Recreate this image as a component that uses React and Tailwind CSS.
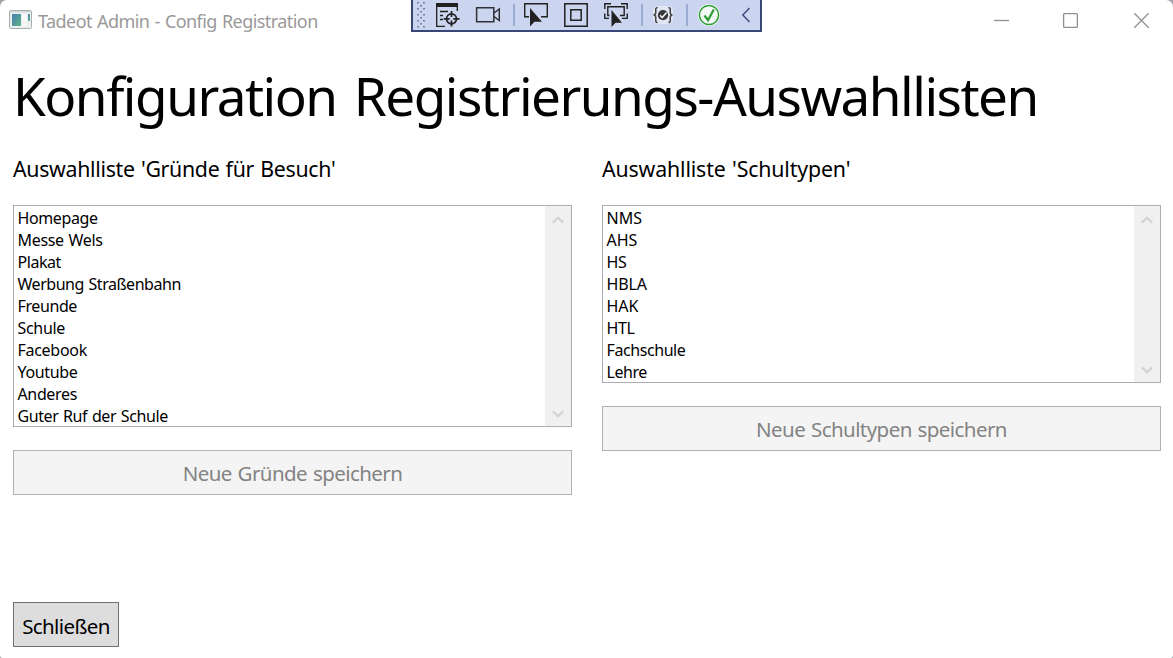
import React from "react";

const reasons = [
  ["Homepage", "tracking-[-0.38px]"],
  ["Messe Wels", "tracking-[-0.33px]"],
  ["Plakat", "tracking-[-0.45px]"],
  ["Werbung Straßenbahn", "tracking-[-0.47px]"],
  ["Freunde", "tracking-[-0.4px]"],
  ["Schule", "tracking-[-0.3px]"],
  ["Facebook", "tracking-[-0.28px]"],
  ["Youtube", "tracking-[-0.35px]"],
  ["Anderes", "tracking-[-0.36px]"],
  ["Guter Ruf der Schule", "tracking-[-0.42px]"],
];

const schoolTypes = [
  ["NMS", "tracking-[0px]"],
  ["AHS", "tracking-[0px]"],
  ["HS", "tracking-[-0.45px]"],
  ["HBLA", "tracking-[-0.1px]"],
  ["HAK", "tracking-[0px]"],
  ["HTL", "tracking-[-0.4px]"],
  ["Fachschule", "tracking-[-0.42px]"],
  ["Lehre", "tracking-[-0.45px]"],
];

function AppIcon() {
  return (
    <svg width="23" height="20" viewBox="0 0 23 20" className="shrink-0">
      <defs>
        <linearGradient id="pane" x1="0" y1="0" x2="1" y2="1">
          <stop offset="0" stopColor="#4a7fae" />
          <stop offset="1" stopColor="#5cb58a" />
        </linearGradient>
      </defs>
      <rect x="0.5" y="0.5" width="22" height="18" rx="1" fill="#eceeef" stroke="#a9aeb2" />
      <rect x="1" y="1" width="21" height="1.5" fill="#d3d7da" />
      <rect x="3" y="4" width="9" height="12" fill="url(#pane)" />
      <rect x="13" y="4" width="5" height="8" fill="#fafafa" />
      <rect x="13" y="13" width="5" height="3" fill="#f8f8f8" />
      <rect x="19" y="4" width="2" height="7" fill="url(#pane)" />
    </svg>
  );
}

function DebugToolbar() {
  return (
    <div className="absolute left-[411px] top-0 h-8 w-[351px] border-2 border-t-0 border-[#394776] bg-[#ccd5f0]">
      <svg width="347" height="30" viewBox="413 0 347 30" fill="none" className="block">
        <g fill="#7481a8">
          {[2, 8, 14, 20, 26].map((y) => (
            <g key={y}>
              <rect x="417" y={y} width="2" height="1.5" />
              <rect x="423" y={y} width="2" height="1.5" />
              {y < 26 && <rect x="420" y={y + 3} width="2" height="1.5" />}
            </g>
          ))}
        </g>
        {/* live visual tree */}
        <g stroke="#212121" strokeWidth="1.3">
          <path d="M436.7 4V26.3H445M457.3 7V11M440 11.5H448M440 15.5H443M440 19.5H443" />
          <path d="M436 3H458V7H436Z" fill="#212121" stroke="none" />
          <circle cx="451.5" cy="18.8" r="5" strokeWidth="1.7" />
          <path d="M451.5 11V17M451.5 20.6V26.6M443.7 18.8H449.7M453.3 18.8H459.5" strokeWidth="1.7" />
        </g>
        {/* camera */}
        <path d="M476.6 7.7H493.8V21.7H476.6ZM494 13L499.3 9V20.5L494 16.5" stroke="#303036" strokeWidth="1.5" />
        <path d="M514 4V26M642 4V26M687 4V26" stroke="#94a6d0" strokeWidth="1.8" />
        {/* select element */}
        <path d="M529 16.7H524.7V3.7H547.3V16.7H541" stroke="#212121" strokeWidth="1.4" />
        <path d="M530 8V26.5L534.4 21.8H542Z" fill="#212121" />
        {/* layout adorners */}
        <path d="M564.8 3.8H587.2V26.2H564.8ZM570.8 9.8H581.2V20.2H570.8Z" stroke="#212121" strokeWidth="1.5" />
        {/* track focused element */}
        <path d="M604.8 9V3.8H611M621 3.8H627.2V9M604.8 13.5V18.4H609M627.2 13.5V18.4H622M609.5 15.5H607.8V6.8H624.2V15.5H620" stroke="#212121" strokeWidth="1.4" />
        <path d="M611.5 10V27L615.5 22.7H622Z" fill="#212121" />
        {/* binding failures */}
        <rect x="653" y="6" width="20" height="18" rx="5" fill="#e1e6f3" />
        <path d="M657.6 7.5C655 7.5 655.8 10 655.8 12C655.8 14.2 655 15 653.5 15C655 15 655.8 15.8 655.8 18C655.8 20 655 22.5 657.6 22.5M668.4 7.5C671 7.5 670.2 10 670.2 12C670.2 14.2 671 15 672.5 15C671 15 670.2 15.8 670.2 18C670.2 20 671 22.5 668.4 22.5" stroke="#424242" strokeWidth="1.5" />
        <circle cx="663" cy="15.2" r="5.1" fill="#383838" />
        <path d="M660 15.3L662.2 17.6L666.6 12.5" stroke="#f2f2f2" strokeWidth="1.6" />
        {/* hot reload status */}
        <circle cx="709" cy="15" r="11" fill="#f4f8f7" />
        <circle cx="709" cy="15" r="9.6" stroke="#2f9e35" strokeWidth="1.5" />
        <path d="M704.5 15.5L708 20.2L713.8 9.5" stroke="#2f9e35" strokeWidth="2.3" />
        <path d="M749.5 8L742.8 15L749.5 22" stroke="#394776" strokeWidth="1.4" />
      </svg>
    </div>
  );
}

function ListBox({ items }) {
  return (
    <div className="mt-[21px] flex border border-[#abadb3] bg-white">
      <ul className="-mb-px flex-1 pl-[3.5px] pt-px text-[16px] leading-[22px] [word-spacing:1px]">
        {items.map(([label, tracking]) => (
          <li key={label} className="h-[22px] whitespace-nowrap">
            <span className={tracking}>{label}</span>
          </li>
        ))}
      </ul>
      <div className="flex w-[26px] flex-col items-center justify-between bg-[#f0f0f0] pb-2 pr-px pt-[10px]">
        <svg width="12" height="8" viewBox="0 0 12 8" fill="none">
          <path d="M0.8 6.6L6 1.8L11.2 6.6" stroke="#d2d2d2" strokeWidth="2.2" />
        </svg>
        <svg width="12" height="8" viewBox="0 0 12 8" fill="none">
          <path d="M0.8 1.4L6 6.2L11.2 1.4" stroke="#d2d2d2" strokeWidth="2.2" />
        </svg>
      </div>
    </div>
  );
}

function SaveButton({ children }) {
  return (
    <button className="mt-[23px] flex h-[45px] w-full items-center justify-center border border-[#adb2b5] bg-[#f4f4f4] pt-[2px] text-[20.5px] tracking-[-0.56px] text-[#838383] [word-spacing:1px]">
      {children}
    </button>
  );
}

export default function App() {
  return (
    <div className="h-[658px] w-[1173px] bg-[#a3a5ae]">
      <div className="relative flex h-full w-full flex-col overflow-hidden rounded-t-[7px] rounded-b-[3px] bg-white font-['Noto_Sans',sans-serif] text-black">
        <header className="flex h-10 shrink-0 items-center pl-[9px] text-[#999999]">
          <AppIcon />
          <span className="ml-[6px] mt-[3px] text-[18px] tracking-[-0.56px] [word-spacing:1px]">Tadeot Admin - Config Registration</span>
          <svg width="160" height="20" viewBox="993 10 160 20" fill="none" stroke="#8f8f8f" strokeWidth="1.3" className="ml-auto mr-5">
            <path d="M994 20.5H1009" />
            <rect x="1063.6" y="13.6" width="13.8" height="13.8" rx="1" />
            <path d="M1134.3 13.3L1148.7 27.7M1148.7 13.3L1134.3 27.7" />
          </svg>
        </header>
        <DebugToolbar />
        <main className="flex flex-1 flex-col items-start pb-[11px] pl-[13px] pr-3">
          <h1 className="mt-[21px] h-[73px] whitespace-nowrap text-[53px] leading-[70px] tracking-[-1.5px] [word-spacing:5px]">
            Konfiguration Registrierungs-Auswahllisten
          </h1>
          <div className="mt-5 grid w-full grid-cols-2 gap-[30px]">
            <section>
              <h2 className="h-[30px] whitespace-nowrap text-[21.33px] leading-[30px] tracking-[-0.31px] [word-spacing:1px]">Auswahlliste 'Gründe für Besuch'</h2>
              <ListBox items={reasons} />
              <SaveButton>Neue Gründe speichern</SaveButton>
            </section>
            <section>
              <h2 className="h-[30px] whitespace-nowrap text-[21.33px] leading-[30px] tracking-[-0.15px] [word-spacing:1px]">Auswahlliste 'Schultypen'</h2>
              <ListBox items={schoolTypes} />
              <SaveButton>Neue Schultypen speichern</SaveButton>
            </section>
          </div>
          <button className="mt-auto flex h-[45px] w-[106px] items-center justify-center border border-[#707070] bg-[#dddddd] pt-[4px] text-[20.5px] tracking-[-0.6px]">
            Schließen
          </button>
        </main>
      </div>
    </div>
  );
}
